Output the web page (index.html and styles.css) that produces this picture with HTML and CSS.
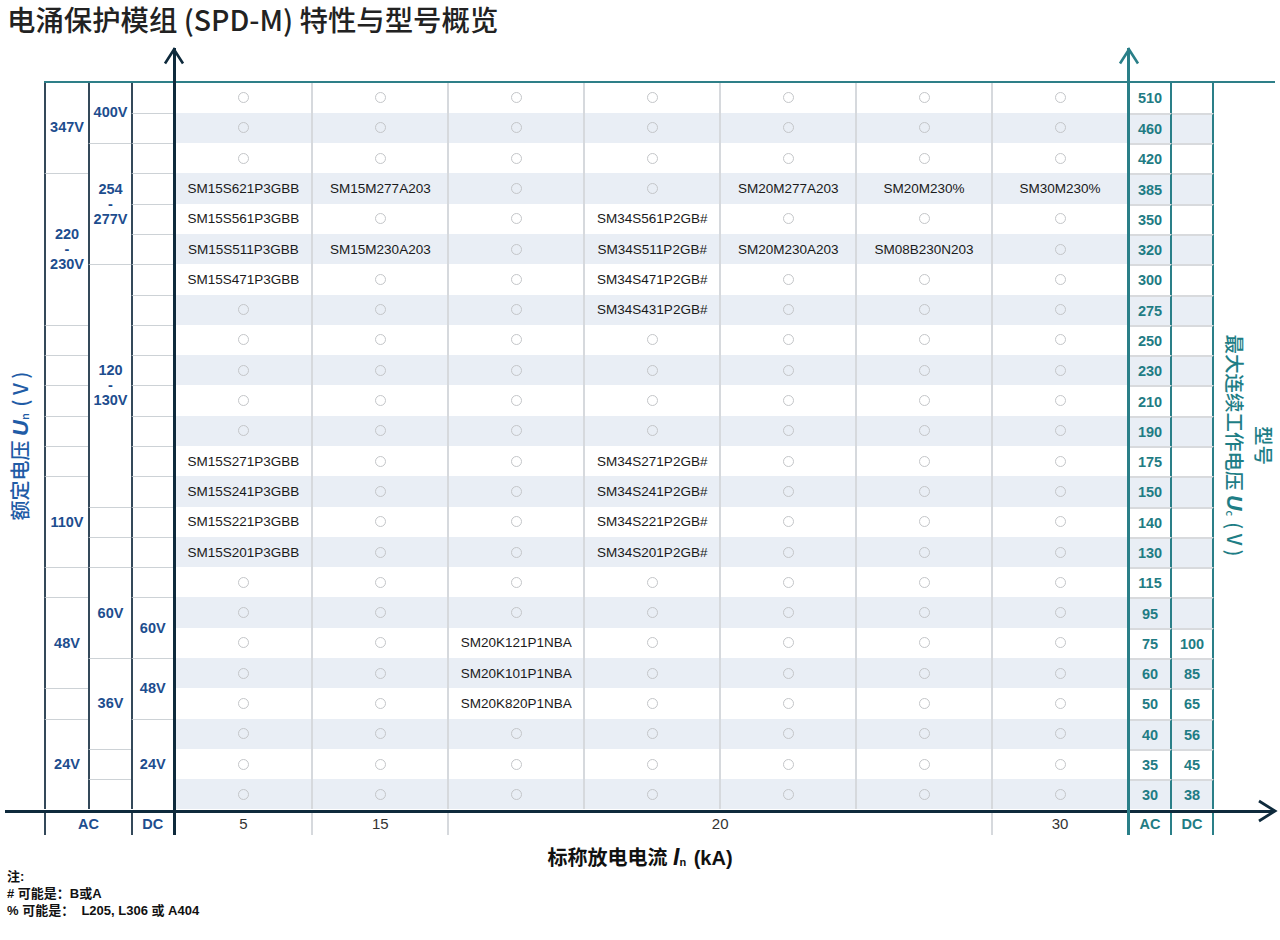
FILE: index.html
```html
<!DOCTYPE html>
<html lang="zh-CN">
<head>
<meta charset="utf-8">
<title>电涌保护模组 (SPD-M) 特性与型号概览</title>
<link rel="stylesheet" href="styles.css">
</head>
<body>
<h1 class="title">电涌保护模组 (SPD-M) 特性与型号概览</h1>
<div class="chart">
  <div class="topline"></div>

  <div class="ylab-l"><div class="rot">额定电压 <span class="var">U</span><sub>n</sub> ( V )</div></div>

  <div class="lblock">
    <div class="l s3 first">347V</div>
    <div class="l s5">220<br>-<br>230V</div>
    <div class="l"></div><div class="l"></div><div class="l"></div><div class="l"></div><div class="l"></div>
    <div class="l s3">110V</div>
    <div class="l"></div>
    <div class="l s3">48V</div>
    <div class="l"></div>
    <div class="l s3">24V</div>

    <div class="l s2 first">400V</div>
    <div class="l s4">254<br>-<br>277V</div>
    <div class="l s8">120<br>-<br>130V</div>
    <div class="l"></div><div class="l"></div>
    <div class="l s3">60V</div>
    <div class="l s3">36V</div>
    <div class="l"></div><div class="l"></div>

    <div class="l first"></div><div class="l"></div><div class="l"></div><div class="l"></div>
    <div class="l"></div><div class="l"></div><div class="l"></div><div class="l"></div>
    <div class="l"></div><div class="l"></div><div class="l"></div><div class="l"></div>
    <div class="l"></div><div class="l"></div><div class="l"></div><div class="l"></div>
    <div class="l"></div>
    <div class="l s2">60V</div>
    <div class="l s2">48V</div>
    <div class="l s3">24V</div>
  </div>

  <div class="main">
    <div class="row"><div class="c o"></div><div class="c o"></div><div class="c o"></div><div class="c o"></div><div class="c o"></div><div class="c o"></div><div class="c o"></div></div>
    <div class="row"><div class="c o"></div><div class="c o"></div><div class="c o"></div><div class="c o"></div><div class="c o"></div><div class="c o"></div><div class="c o"></div></div>
    <div class="row"><div class="c o"></div><div class="c o"></div><div class="c o"></div><div class="c o"></div><div class="c o"></div><div class="c o"></div><div class="c o"></div></div>
    <div class="row"><div class="c">SM15S621P3GBB</div><div class="c">SM15M277A203</div><div class="c o"></div><div class="c o"></div><div class="c">SM20M277A203</div><div class="c">SM20M230%</div><div class="c">SM30M230%</div></div>
    <div class="row"><div class="c">SM15S561P3GBB</div><div class="c o"></div><div class="c o"></div><div class="c">SM34S561P2GB#</div><div class="c o"></div><div class="c o"></div><div class="c o"></div></div>
    <div class="row"><div class="c">SM15S511P3GBB</div><div class="c">SM15M230A203</div><div class="c o"></div><div class="c">SM34S511P2GB#</div><div class="c">SM20M230A203</div><div class="c">SM08B230N203</div><div class="c o"></div></div>
    <div class="row"><div class="c">SM15S471P3GBB</div><div class="c o"></div><div class="c o"></div><div class="c">SM34S471P2GB#</div><div class="c o"></div><div class="c o"></div><div class="c o"></div></div>
    <div class="row"><div class="c o"></div><div class="c o"></div><div class="c o"></div><div class="c">SM34S431P2GB#</div><div class="c o"></div><div class="c o"></div><div class="c o"></div></div>
    <div class="row"><div class="c o"></div><div class="c o"></div><div class="c o"></div><div class="c o"></div><div class="c o"></div><div class="c o"></div><div class="c o"></div></div>
    <div class="row"><div class="c o"></div><div class="c o"></div><div class="c o"></div><div class="c o"></div><div class="c o"></div><div class="c o"></div><div class="c o"></div></div>
    <div class="row"><div class="c o"></div><div class="c o"></div><div class="c o"></div><div class="c o"></div><div class="c o"></div><div class="c o"></div><div class="c o"></div></div>
    <div class="row"><div class="c o"></div><div class="c o"></div><div class="c o"></div><div class="c o"></div><div class="c o"></div><div class="c o"></div><div class="c o"></div></div>
    <div class="row"><div class="c">SM15S271P3GBB</div><div class="c o"></div><div class="c o"></div><div class="c">SM34S271P2GB#</div><div class="c o"></div><div class="c o"></div><div class="c o"></div></div>
    <div class="row"><div class="c">SM15S241P3GBB</div><div class="c o"></div><div class="c o"></div><div class="c">SM34S241P2GB#</div><div class="c o"></div><div class="c o"></div><div class="c o"></div></div>
    <div class="row"><div class="c">SM15S221P3GBB</div><div class="c o"></div><div class="c o"></div><div class="c">SM34S221P2GB#</div><div class="c o"></div><div class="c o"></div><div class="c o"></div></div>
    <div class="row"><div class="c">SM15S201P3GBB</div><div class="c o"></div><div class="c o"></div><div class="c">SM34S201P2GB#</div><div class="c o"></div><div class="c o"></div><div class="c o"></div></div>
    <div class="row"><div class="c o"></div><div class="c o"></div><div class="c o"></div><div class="c o"></div><div class="c o"></div><div class="c o"></div><div class="c o"></div></div>
    <div class="row"><div class="c o"></div><div class="c o"></div><div class="c o"></div><div class="c o"></div><div class="c o"></div><div class="c o"></div><div class="c o"></div></div>
    <div class="row"><div class="c o"></div><div class="c o"></div><div class="c">SM20K121P1NBA</div><div class="c o"></div><div class="c o"></div><div class="c o"></div><div class="c o"></div></div>
    <div class="row"><div class="c o"></div><div class="c o"></div><div class="c">SM20K101P1NBA</div><div class="c o"></div><div class="c o"></div><div class="c o"></div><div class="c o"></div></div>
    <div class="row"><div class="c o"></div><div class="c o"></div><div class="c">SM20K820P1NBA</div><div class="c o"></div><div class="c o"></div><div class="c o"></div><div class="c o"></div></div>
    <div class="row"><div class="c o"></div><div class="c o"></div><div class="c o"></div><div class="c o"></div><div class="c o"></div><div class="c o"></div><div class="c o"></div></div>
    <div class="row"><div class="c o"></div><div class="c o"></div><div class="c o"></div><div class="c o"></div><div class="c o"></div><div class="c o"></div><div class="c o"></div></div>
    <div class="row"><div class="c o"></div><div class="c o"></div><div class="c o"></div><div class="c o"></div><div class="c o"></div><div class="c o"></div><div class="c o"></div></div>
  </div>

  <div class="rblock">
    <div class="row"><div>510</div><div></div></div>
    <div class="row"><div>460</div><div></div></div>
    <div class="row"><div>420</div><div></div></div>
    <div class="row"><div>385</div><div></div></div>
    <div class="row"><div>350</div><div></div></div>
    <div class="row"><div>320</div><div></div></div>
    <div class="row"><div>300</div><div></div></div>
    <div class="row"><div>275</div><div></div></div>
    <div class="row"><div>250</div><div></div></div>
    <div class="row"><div>230</div><div></div></div>
    <div class="row"><div>210</div><div></div></div>
    <div class="row"><div>190</div><div></div></div>
    <div class="row"><div>175</div><div></div></div>
    <div class="row"><div>150</div><div></div></div>
    <div class="row"><div>140</div><div></div></div>
    <div class="row"><div>130</div><div></div></div>
    <div class="row"><div>115</div><div></div></div>
    <div class="row"><div>95</div><div></div></div>
    <div class="row"><div>75</div><div>100</div></div>
    <div class="row"><div>60</div><div>85</div></div>
    <div class="row"><div>50</div><div>65</div></div>
    <div class="row"><div>40</div><div>56</div></div>
    <div class="row"><div>35</div><div>45</div></div>
    <div class="row"><div>30</div><div>38</div></div>
  </div>

  <div class="ylab-r"><div class="rot">型号<br>最大连续工作电压 <span class="var">U</span><sub>c</sub> ( V )</div></div>

  <div class="xl-l"><div>AC</div><div>DC</div></div>
  <div class="xl-m"><div>5</div><div>15</div><div class="wide">20</div><div>30</div></div>
  <div class="xl-r"><div>AC</div><div>DC</div></div>

  <div class="xaxis">
    <svg class="arrow-right" viewBox="0 0 20 24" width="20" height="24"><path d="M2 2 L18 12 L2 22" fill="none" stroke="#0e2a3c" stroke-width="2.8"/></svg>
  </div>
  <div class="axis axis-l">
    <svg class="arrow-up" viewBox="0 0 22 16" width="22" height="16"><path d="M2 15.5 L11 1.5 L20 15.5" fill="none" stroke="#0e2a3c" stroke-width="2.6"/></svg>
  </div>
  <div class="axis axis-r">
    <svg class="arrow-up" viewBox="0 0 22 16" width="22" height="16"><path d="M2 15.5 L11 1.5 L20 15.5" fill="none" stroke="#2a7f88" stroke-width="2.6"/></svg>
  </div>
</div>

<div class="xlabel">标称放电电流 <span class="var">I</span><sub>n</sub> (kA)</div>

<div class="notes">
  <div class="note">注:</div>
  <div class="note"># 可能是：B或A</div>
  <div class="note">% 可能是：  L205, L306 或 A404</div>
</div>
</body>
</html>
```

FILE: styles.css
```css
* { box-sizing: border-box; }
html, body { margin: 0; padding: 0; background: #fff; }
body {
  width: 1280px;
  height: 940px;
  overflow: hidden;
  font-family: "Liberation Sans", "Noto Sans CJK SC", sans-serif;
  color: #1a1a1a;
}

.title {
  margin: 0;
  padding-left: 7px;
  font: 500 28.4px/38px "Noto Sans CJK SC", sans-serif;
  color: #222;
}

.chart {
  display: grid;
  grid-template-columns: 44px 128.5px 3px 951.5px 3px 84px 66px;
  grid-template-rows: 34.5px 2px 727px 3px 22px;
  margin-top: 8px;
}

.topline {
  grid-column: 2 / 8;
  grid-row: 2;
  background: #2e7f88;
  margin-right: 5px;
}

.xaxis {
  grid-column: 1 / 8;
  grid-row: 4;
  background: #0e2a3c;
  margin: 0 6px 0 5px;
  position: relative;
}
.arrow-right {
  position: absolute;
  right: -3px;
  top: -10.5px;
  overflow: visible;
}

.axis {
  grid-row: 1 / 6;
  margin-top: 2px;
  position: relative;
}
.axis-l { grid-column: 3; background: #0e2a3c; }
.axis-r { grid-column: 5; background: #2a7f88; }
.arrow-up {
  position: absolute;
  left: -9.5px;
  top: 0;
  overflow: visible;
}

/* left rotated label */
.ylab-l {
  grid-column: 1;
  grid-row: 3;
  display: flex;
  align-items: center;
  justify-content: center;
}
.ylab-l .rot {
  transform: rotate(-90deg);
  white-space: nowrap;
  font: 500 20px/24px "Noto Sans CJK SC", sans-serif;
  color: #1f5ca6;
}
.var {
  font-family: "Liberation Sans", sans-serif;
  font-weight: bold;
  font-style: italic;
  font-size: 1.1em;
}
sub {
  font-size: 0.55em;
  vertical-align: -0.1em;
  margin-right: 2px;
}

/* right rotated label */
.ylab-r {
  grid-column: 7;
  grid-row: 3;
  display: flex;
  align-items: center;
  justify-content: center;
}
.ylab-r .rot {
  transform: rotate(90deg);
  white-space: nowrap;
  text-align: center;
  font: 500 19.5px/29px "Noto Sans CJK SC", sans-serif;
  color: #1e7e86;
}

/* left voltage block */
.lblock {
  grid-column: 2;
  grid-row: 3;
  display: grid;
  grid-template-columns: 44px 43px 41.5px;
  grid-template-rows: repeat(24, 1fr);
  grid-auto-flow: column;
}
.l {
  border-left: 2px solid #34495a;
  border-top: 1px solid #cdd2d6;
  display: flex;
  align-items: center;
  justify-content: center;
  text-align: center;
  font: bold 14.5px/15px "Liberation Sans", sans-serif;
  color: #1d4d8e;
}
.l.first { border-top: 0; }
.s2 { grid-row: span 2; }
.s3 { grid-row: span 3; }
.s4 { grid-row: span 4; }
.s5 { grid-row: span 5; }
.s8 { grid-row: span 8; }

/* main matrix */
.main {
  grid-column: 4;
  grid-row: 3;
  display: grid;
  grid-template-columns: repeat(7, 1fr);
  grid-template-rows: repeat(24, 1fr);
}
.row { display: contents; }
.main .c {
  display: flex;
  align-items: center;
  justify-content: center;
  white-space: nowrap;
  font-size: 13.5px;
  color: #1a1a1a;
  border-left: 2px solid #d6d9dd;
}
.main .c:first-child { border-left: 0; }
.main .row:nth-child(even) > .c,
.rblock .row:nth-child(even) > div { background: #e9eef5; }
.o::before {
  content: "";
  width: 9px;
  height: 9px;
  border: 1px solid #c4c6c9;
  border-radius: 50%;
}

/* right Uc block */
.rblock {
  grid-column: 6;
  grid-row: 3;
  display: grid;
  grid-template-columns: 42px 42px;
  grid-template-rows: repeat(24, 1fr);
}
.rblock .row > div {
  display: flex;
  align-items: center;
  justify-content: center;
  font: bold 14.5px "Liberation Sans", sans-serif;
  color: #1f7c84;
  border-right: 2px solid #2a7f88;
  border-top: 2px solid #d8dadd;
}
.rblock .row:first-child > div { border-top: 0; }

/* axis label row */
.xl-l {
  grid-column: 2;
  grid-row: 5;
  display: grid;
  grid-template-columns: 87px 41.5px;
}
.xl-l div {
  display: flex;
  align-items: center;
  justify-content: center;
  border-left: 2px solid #34495a;
  font: bold 14.5px "Liberation Sans", sans-serif;
  color: #1d4d8e;
}
.xl-m {
  grid-column: 4;
  grid-row: 5;
  display: grid;
  grid-template-columns: repeat(7, 1fr);
}
.xl-m div {
  display: flex;
  align-items: center;
  justify-content: center;
  border-left: 2px solid #d6d9dd;
  font-size: 15px;
  color: #333;
}
.xl-m div:first-child { border-left: 0; }
.xl-m .wide { grid-column: span 4; }
.xl-r {
  grid-column: 6;
  grid-row: 5;
  display: grid;
  grid-template-columns: 42px 42px;
}
.xl-r div {
  display: flex;
  align-items: center;
  justify-content: center;
  border-right: 2px solid #2a7f88;
  font: bold 14.5px "Liberation Sans", sans-serif;
  color: #1f7c84;
}

.xlabel {
  margin-top: 13.5px;
  text-align: center;
  font: bold 20px/18px "Liberation Sans", "Noto Sans CJK SC", sans-serif;
  color: #111;
}
.xlabel .var { font-size: 1.15em; }

.notes {
  margin-top: -3px;
  padding-left: 7px;
  font: bold 13px/17px "Liberation Sans", "Noto Sans CJK SC", sans-serif;
  color: #111;
}
.note { white-space: pre; }
```
